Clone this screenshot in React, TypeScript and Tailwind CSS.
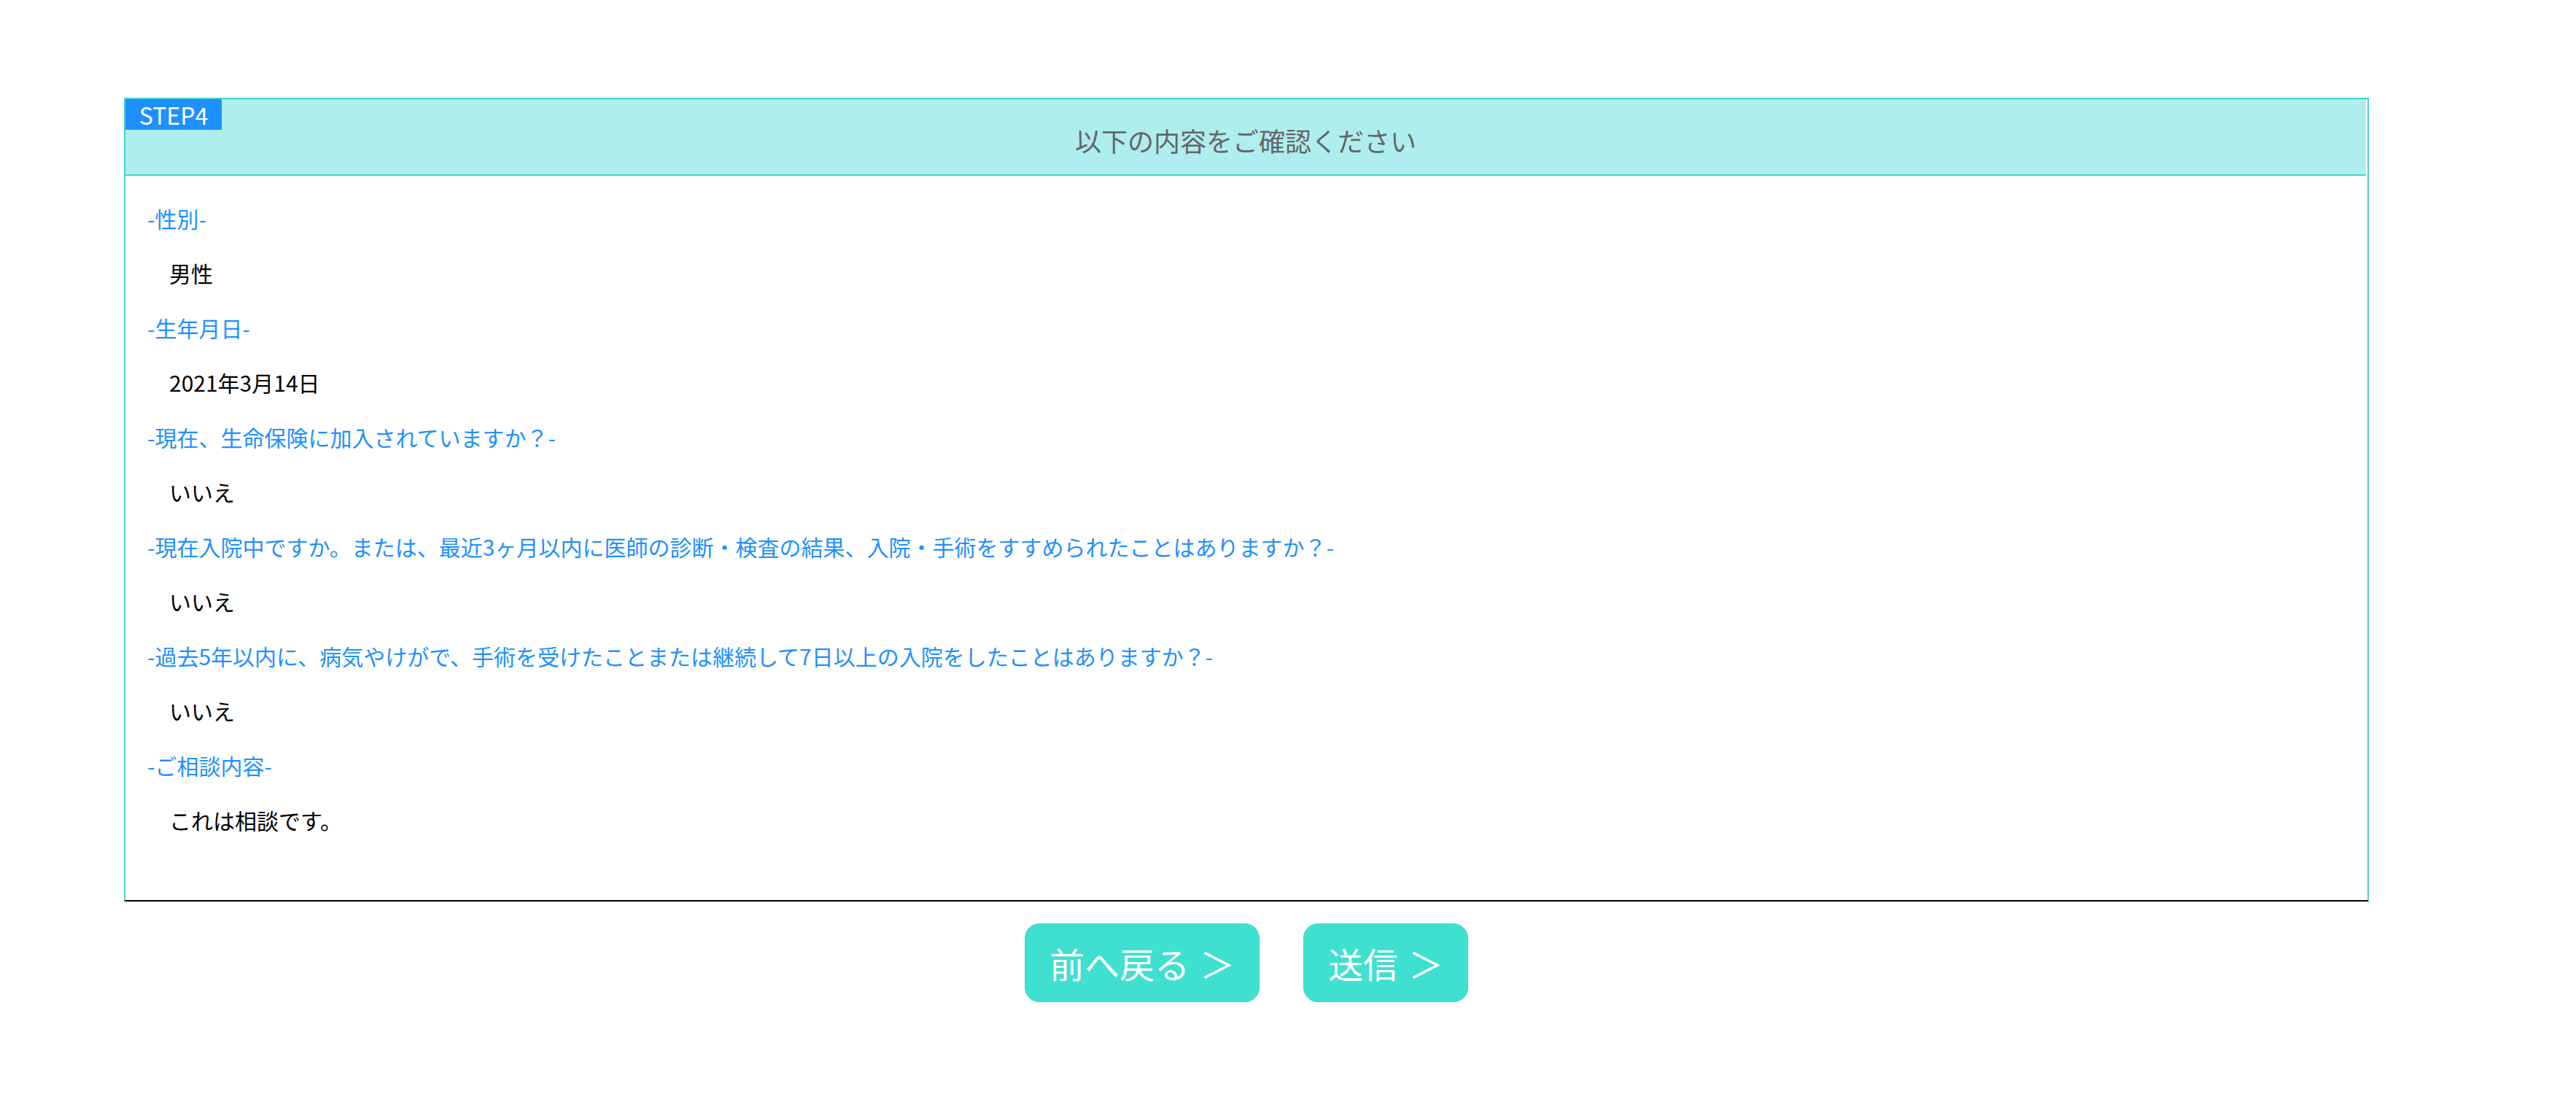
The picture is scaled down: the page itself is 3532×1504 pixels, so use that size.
import React from "react";

const items = [
  { label: "性別", value: "男性" },
  { label: "生年月日", value: "2021年3月14日" },
  { label: "現在、生命保険に加入されていますか？", value: "いいえ" },
  {
    label: "現在入院中ですか。または、最近3ヶ月以内に医師の診断・検査の結果、入院・手術をすすめられたことはありますか？",
    value: "いいえ",
  },
  {
    label: "過去5年以内に、病気やけがで、手術を受けたことまたは継続して7日以上の入院をしたことはありますか？",
    value: "いいえ",
  },
  { label: "ご相談内容", value: "これは相談です。" },
];

export default function App() {
  return (
    <div className="min-h-screen bg-white font-['Noto_Sans_CJK_JP','Noto_Sans',sans-serif]">
      <div className="ml-[170px] w-[3078px] pt-[134px]">
        {/* confirm box */}
        <div className="relative border-2 border-[#48d1cc] border-b-black">
          <div className="mr-[2px] flex h-[105px] items-center justify-center border-b-2 border-[#48d1cc] bg-[#afeeee] pt-[9px]">
            <span className="absolute left-0 top-0 h-[42px] w-[132px] bg-[#1e90ff] text-center text-[32px] leading-[42px] text-white">
              STEP4
            </span>
            <h2 className="text-[36px] leading-[48px] text-[#666]">以下の内容をご確認ください</h2>
          </div>

          <div className="flex flex-col gap-[30px] pb-[87px] pl-[30px] pt-[36px]">
            {items.map((it, i) => (
              <React.Fragment key={i}>
                <p className="text-[30px] leading-[45px] text-[#1e90ff]">-{it.label}-</p>
                <p className="pl-[30px] text-[30px] leading-[45px] text-black">{it.value}</p>
              </React.Fragment>
            ))}
          </div>
        </div>

        {/* buttons */}
        <div className="flex justify-center gap-[60px] pt-[30px]">
          <button
            type="button"
            className="flex h-[108px] w-[322px] items-center justify-center rounded-[20px] border border-[#48d1cc] bg-[#40e0d0] text-[48px] text-white"
          >
            前へ戻る<span className="ml-[14px]">＞</span>
          </button>
          <button
            type="button"
            className="flex h-[108px] w-[226px] items-center justify-center rounded-[20px] border border-[#48d1cc] bg-[#40e0d0] text-[48px] text-white"
          >
            送信<span className="ml-[14px]">＞</span>
          </button>
        </div>
      </div>
    </div>
  );
}
